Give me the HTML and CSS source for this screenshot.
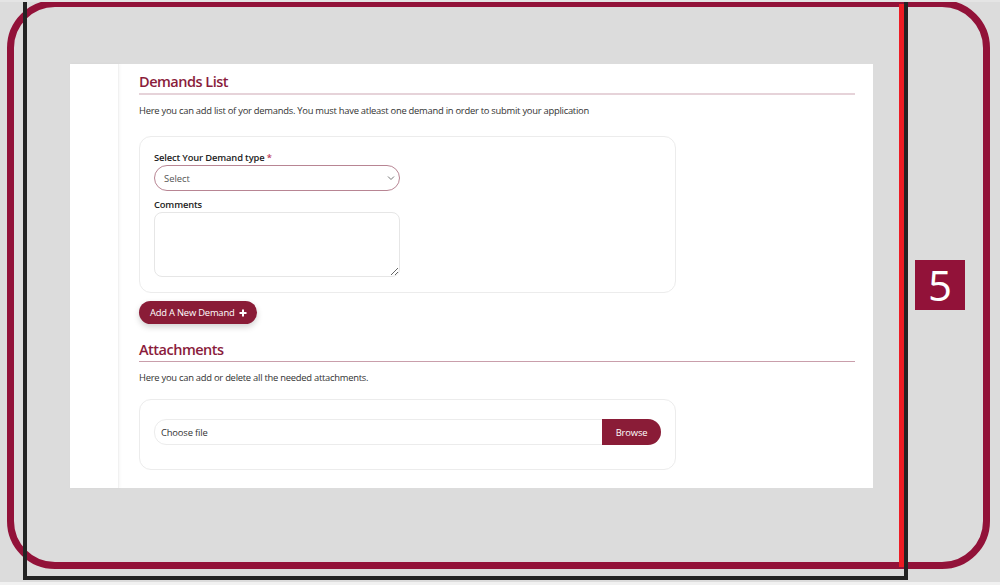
FILE: index.html
```html
<!DOCTYPE html>
<html lang="en">
<head>
    <meta charset="UTF-8">
    <title>Demands</title>
    <link rel="stylesheet" href="styles.css">
</head>
<body>
<div id="stage">
    <div id="panel">
        <div id="side"></div>
        <div id="main">
            <h2 class="title">Demands List</h2>
            <p class="hint">Here you can add list of yor demands. You must have atleast one demand in order to submit your application</p>

            <div class="card">
                <label class="lbl">Select Your Demand type <span class="req">*</span></label>
                <div class="select">
                    <span>Select</span>
                    <svg width="8" height="6" viewBox="0 0 8 6"><path d="M1 1.5 L4 4.5 L7 1.5" fill="none" stroke="#777" stroke-width="1"/></svg>
                </div>
                <label class="lbl lbl-gap">Comments</label>
                <textarea class="area"></textarea>
            </div>

            <button class="btn-add">Add A New Demand
                <svg width="8" height="8" viewBox="0 0 8 8"><path d="M4 0.5 V7.5 M0.5 4 H7.5" stroke="#fff" stroke-width="2"/></svg>
            </button>

            <h2 class="title title-2">Attachments</h2>
            <p class="hint">Here you can add or delete all the needed attachments.</p>

            <div class="card card-file">
                <div class="file">
                    <span class="file-name">Choose file</span>
                    <span class="browse">Browse</span>
                </div>
            </div>
        </div>
    </div>

    <!-- annotation marks -->
    <div id="frame"></div>
    <div id="box"></div>
    <div id="redline"></div>
    <div id="badge">5</div>
</div>
</body>
</html>
```

FILE: styles.css
```css
*{
    margin: 0;
    padding: 0;
    box-sizing: border-box;
}
body{
    background: #dcdcdc;
    font-family: "Open Sans", "Noto Sans", sans-serif;
    overflow: hidden;
}

#stage{
    width: 1000px;
    height: 585px;
    position: relative;
    border-top: 2px solid #e4e4e4;
    border-bottom: 3px solid #f1f1f1;
    overflow: hidden;
}

#panel{
    width: 803px;
    height: 424px;
    margin: 62px 0 0 70px;
    background: #fff;
    display: flex;
}
#side{
    width: 49px;
    flex: none;
    border-right: 1px solid #f1f1f1;
    box-shadow: 1px 0 3px rgba(0,0,0,0.04);
}
#main{
    flex: 1;
    padding: 8px 18px 0 20px;
}

.title{
    font-size: 14.5px;
    font-weight: 600;
    color: #8a1c3b;
    line-height: 20px;
    letter-spacing: -0.5px;
    padding-bottom: 1px;
    border-bottom: 2px solid #e6d3d9;
}
.title-2{
    margin-top: 16px;
    padding-bottom: 1px;
    border-bottom: 1px solid #c99eab;
}
.hint{
    font-size: 9.4px;
    color: #333;
    line-height: 14px;
    letter-spacing: -0.25px;
    margin-top: 9px;
}

.card{
    width: 537px;
    margin-top: 18px;
    border: 1px solid #ececec;
    border-radius: 12px;
    padding: 14px 14px 15px;
}
.lbl{
    display: block;
    font-size: 9.4px;
    font-weight: 600;
    color: #222;
    line-height: 14px;
    letter-spacing: -0.15px;
}
.req{
    color: #c0395a;
}
.lbl-gap{
    margin-top: 7px;
}
.select{
    width: 246px;
    height: 26px;
    border: 1px solid #b88593;
    border-radius: 13px;
    display: flex;
    align-items: center;
    justify-content: space-between;
    padding: 0 4px 0 9px;
    font-size: 9.4px;
    color: #555;
}
.area{
    display: block;
    width: 246px;
    height: 65px;
    border: 1px solid #e6e6e6;
    border-radius: 8px;
    resize: vertical;
    outline: none;
}

.btn-add{
    margin-top: 8px;
    height: 23px;
    padding: 0 10px 0 11px;
    border: none;
    border-radius: 12px;
    background: #8a1c37;
    color: #fff;
    font-family: inherit;
    font-size: 9.4px;
    letter-spacing: -0.2px;
    display: flex;
    align-items: center;
    gap: 5px;
    box-shadow: 0 3px 6px rgba(0,0,0,0.18);
}

.card-file{
    margin-top: 14px;
    padding: 19px 14px 24px;
}
.file{
    height: 26px;
    border: 1px solid #ececec;
    border-radius: 13px 14px 14px 13px;
    display: flex;
    align-items: center;
    justify-content: space-between;
    font-size: 9.4px;
    letter-spacing: -0.15px;
}
.file-name{
    padding-left: 6px;
    color: #333;
}
.browse{
    width: 59px;
    height: 26px;
    margin-right: -1px;
    background: #8a1c37;
    color: #fff;
    border-radius: 0 13px 13px 0;
    display: flex;
    align-items: center;
    justify-content: center;
}

/* overlays */
#frame{
    position: absolute;
    left: 7px;
    top: -2px;
    width: 983px;
    height: 569px;
    border: 7px solid #921239;
    border-radius: 48px;
}
#box{
    position: absolute;
    left: 23px;
    top: -12px;
    width: 885px;
    height: 590px;
    border: 4px solid #232323;
}
#redline{
    position: absolute;
    left: 899px;
    top: 2px;
    width: 5px;
    height: 563px;
    background: #ed1c24;
}
#badge{
    position: absolute;
    left: 915px;
    top: 258px;
    width: 50px;
    height: 50px;
    background: #921239;
    color: #fff;
    font-size: 42px;
    line-height: 50px;
    text-align: center;
}
```
